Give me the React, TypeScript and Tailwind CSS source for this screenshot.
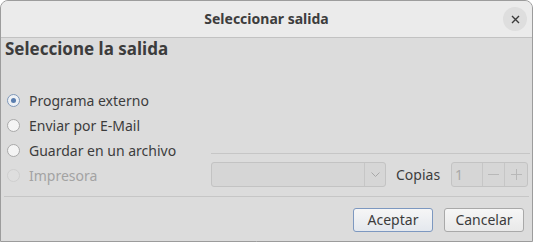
import React from "react";

function Radio({ label, checked, disabled }: { label: string; checked?: boolean; disabled?: boolean }) {
  return (
    <label className={`flex h-[25px] items-center gap-[9px] ${disabled ? "text-[#a3a3a3]" : "text-[#3c3c3c]"}`}>
      <span
        className={`flex h-[13px] w-[13px] items-center justify-center rounded-full border ${
          checked ? "border-[#7f98b9] bg-[#eef1f5]" : disabled ? "border-[#cfcfcf] bg-[#dedede]" : "border-[#a9a9a9] bg-[#f4f4f4]"
        }`}
      >
        {checked && <span className="h-[5px] w-[5px] rounded-full bg-[#5a7eaf]" />}
      </span>
      <span>{label}</span>
    </label>
  );
}

export default function App() {
  return (
    <div
      className="flex h-[242px] w-[533px] flex-col overflow-hidden rounded-t-[8px] border border-[#9c9c9c] bg-[#dcdcdc] text-[14px] leading-[20px]"
      style={{ fontFamily: "'Noto Sans', 'Open Sans', sans-serif" }}
    >
      {/* title bar */}
      <div className="relative flex h-[37px] shrink-0 items-center justify-center border-b border-[#c2c2c2] bg-[#ebebeb]">
        <span className="text-[14px] font-bold text-[#3d3d3d]">Seleccionar salida</span>
        <button className="absolute right-[5px] top-[6px] flex h-[24px] w-[24px] items-center justify-center rounded-full bg-[#dedede] text-[#3c3c3c]">
          <svg width="9" height="9" viewBox="0 0 9 9">
            <path d="M1 1 L8 8 M8 1 L1 8" stroke="#3a3a3a" strokeWidth="1.4" />
          </svg>
        </button>
      </div>

      <div className="flex flex-1 flex-col">
        <h1 className="ml-[4px] text-[17px] font-bold leading-[22px] text-[#3c3c3c]">Seleccione la salida</h1>

        <div className="mt-[28px] flex">
          <div className="ml-[6px] flex w-[204px] flex-col">
            <Radio label="Programa externo" checked />
            <Radio label="Enviar por E-Mail" />
            <Radio label="Guardar en un archivo" />
            <Radio label="Impresora" disabled />
          </div>
          <div className="flex flex-1 flex-col justify-end">
            <div className="mb-[8px] mr-[2px] h-px bg-[#c6c6c6]" />
            <div className="mb-[1px] flex items-center">
              <div className="flex h-[25px] w-[175px] items-stretch rounded-[3px] border border-[#c3c3c3] bg-[#d6d6d6]">
                <div className="flex-1" />
                <div className="flex w-[21px] items-center justify-center border-l border-[#c6c6c6]">
                  <svg width="9" height="5" viewBox="0 0 9 5">
                    <path d="M0.5 0.5 L4.5 4.5 L8.5 0.5" stroke="#a8a8a8" fill="none" />
                  </svg>
                </div>
              </div>
              <span className="ml-[10px] text-[#3c3c3c]">Copias</span>
              <div className="ml-[11px] flex h-[25px] w-[77px] items-stretch rounded-[3px] border border-[#c3c3c3] bg-[#d6d6d6] text-[#a8a8a8]">
                <div className="flex w-[30px] items-center pl-[3px]">1</div>
                <div className="flex w-[22px] items-center justify-center border-l border-[#c6c6c6]">
                  <svg width="11" height="11" viewBox="0 0 11 11">
                    <path d="M0 5.5 L11 5.5" stroke="#b8b8b8" />
                  </svg>
                </div>
                <div className="flex flex-1 items-center justify-center border-l border-[#c6c6c6]">
                  <svg width="11" height="11" viewBox="0 0 11 11">
                    <path d="M0 5.5 L11 5.5 M5.5 0 L5.5 11" stroke="#b8b8b8" />
                  </svg>
                </div>
              </div>
            </div>
          </div>
        </div>

        <div className="mx-[3px] mt-[8px] h-px bg-[#c6c6c6]" />

        <div className="mr-[8px] mt-[11px] flex justify-end gap-[11px]">
          <button className="h-[24px] w-[80px] rounded-[3px] border border-[#7d98c0] bg-gradient-to-b from-[#f6f6f6] to-[#e4e8ee] text-[#3c3c3c]">
            Aceptar
          </button>
          <button className="h-[24px] w-[80px] rounded-[3px] border border-[#a9a9a9] bg-gradient-to-b from-[#f6f6f6] to-[#e9e9e9] text-[#3c3c3c]">
            Cancelar
          </button>
        </div>
      </div>
    </div>
  );
}
